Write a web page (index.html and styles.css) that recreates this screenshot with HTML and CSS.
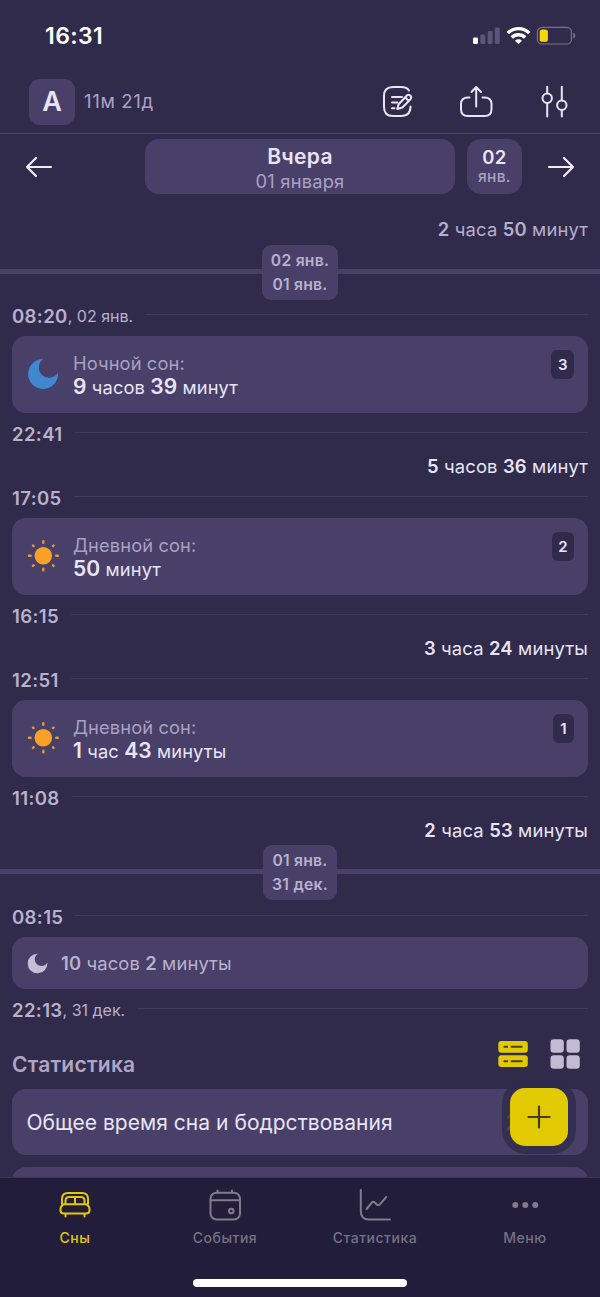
FILE: index.html
```html
<!DOCTYPE html>
<html lang="ru">
<head>
<meta charset="utf-8">
<title>Сны</title>
<link rel="stylesheet" href="styles.css">
</head>
<body>
<div class="app">
  <div class="status">
    <span class="clock">16:31</span>
    <svg class="status-icons" width="104" height="20" viewBox="0 0 104 20">
      <rect x="1" y="11.5" width="5" height="6.5" rx="1.3" fill="#fff"/>
      <g fill="#5b5675"><rect x="8.3" y="8.5" width="5" height="9.5" rx="1.3"/><rect x="15.6" y="5" width="5" height="13" rx="1.3"/><rect x="22.8" y="1.5" width="5" height="16.5" rx="1.3"/></g>
      <g fill="none" stroke="#fff" stroke-width="3.4"><path d="M35.800 7.200A14.800 14.800 0 0 1 57.200 7.200"/><path d="M39.800 11.500A9.400 9.400 0 0 1 53.200 11.500"/></g>
      <path d="M43 14.800A5 5 0 0 1 50 14.800L46.500 18.200Z" fill="#fff"/>
      <rect x="65.4" y="1.4" width="34" height="16.6" rx="4.6" fill="none" stroke="#787488" stroke-width="1.2"/>
      <rect x="67.7" y="3.6" width="8.2" height="12.2" rx="2.6" fill="#fcd60c"/>
      <path d="M101.2 6.8Q103.3 7.5 103.3 9.7T101.2 12.6Z" fill="#787488"/>
    </svg>
  </div>
  <header class="header">
    <div class="avatar">А</div>
    <span class="age">11м 21д</span>
    <div class="actions">
      <svg width="34" height="34" viewBox="0 0 34 34"><path d="M28 6.500Q26 3 20 3H12Q3 3 3 12V23Q3 32 12 32H20Q29.500 32 29.500 22.500"/><path d="M11 13H21M11 18.500H16.500M11 24.300H13.500"/><path d="M17.500 20.500L25.600 11.700Q27.400 10 29.300 11.500Q31 13.300 29.500 15.200L21.400 23.500L16.300 25Z M24.200 13.300L27.800 17"/></svg>
      <svg width="34" height="34" viewBox="0 0 34 34"><path d="M10.500 13.500H9Q2 13.500 2 20V25Q2 32 9 32H25.500Q32.500 32 32.500 25V20Q32.500 13.500 25.500 13.500H23.500M17.200 22.500V3.500M12.500 8L17.200 3L22 8"/></svg>
      <svg width="34" height="34" viewBox="0 0 34 34"><path d="M10.200 2.800V9M10.200 19.500V32.500M24.800 2.800V16M24.800 26V32.500"/><circle cx="10.200" cy="14.300" r="4.700"/><circle cx="24.800" cy="21.200" r="4.700"/></svg>
    </div>
  </header>
  <nav class="dates">
    <svg class="arrow" width="28" height="24" viewBox="0 0 28 24"><path d="M26 12H2M11 3L2 12L11 21"/></svg>
    <div class="day current"><b>Вчера</b><span>01 января</span></div>
    <div class="day next"><b>02</b><span>янв.</span></div>
    <svg class="arrow" width="28" height="24" viewBox="0 0 28 24"><path d="M2 12H26M17 3L26 12L17 21"/></svg>
  </nav>
  <main class="timeline">
    <div class="awake dim"><b>2</b> часа <b>50</b> минут</div>
    <div class="divider"><div class="badge"><span>02 янв.</span><span>01 янв.</span></div></div>
    <div class="time"><b>08:20</b><small>, 02 янв.</small></div>
    <section class="card">
      <svg class="icon" width="32" height="32" viewBox="0 0 32 32"><path d="M16.300 1A10.300 10.300 0 1 0 31 14.700A15 15 0 1 1 16.300 1Z" fill="#3f87cf"/></svg>
      <div class="info"><span>Ночной сон:</span><p><b>9</b> часов <b>39</b> минут</p></div>
      <i class="count">3</i>
    </section>
    <div class="time"><b>22:41</b></div>
    <div class="awake"><b>5</b> часов <b>36</b> минут</div>
    <div class="time before"><b>17:05</b></div>
    <section class="card">
      <svg class="icon" width="32" height="32" viewBox="0 0 32 32"><circle cx="16.300" cy="15.700" r="8.800" fill="#f9a126"/><path class="rays" d="M16.300 1.200V2.800M16.300 28.700V30.300M2 15.700H3.600M29.200 15.700H30.800M6 5.500L6.600 6.100M26 25.300L26.600 25.900M6 25.900L6.600 25.300M26 6.100L26.600 5.500"/></svg>
      <div class="info"><span>Дневной сон:</span><p><b>50</b> минут</p></div>
      <i class="count">2</i>
    </section>
    <div class="time"><b>16:15</b></div>
    <div class="awake"><b>3</b> часа <b>24</b> минуты</div>
    <div class="time before"><b>12:51</b></div>
    <section class="card">
      <svg class="icon" width="32" height="32" viewBox="0 0 32 32"><circle cx="16.300" cy="15.700" r="8.800" fill="#f9a126"/><path class="rays" d="M16.300 1.200V2.800M16.300 28.700V30.300M2 15.700H3.600M29.200 15.700H30.800M6 5.500L6.600 6.100M26 25.300L26.600 25.900M6 25.900L6.600 25.300M26 6.100L26.600 5.500"/></svg>
      <div class="info"><span>Дневной сон:</span><p><b>1</b> час <b>43</b> минуты</p></div>
      <i class="count">1</i>
    </section>
    <div class="time"><b>11:08</b></div>
    <div class="awake"><b>2</b> часа <b>53</b> минуты</div>
    <div class="divider second"><div class="badge"><span>01 янв.</span><span>31 дек.</span></div></div>
    <div class="time"><b>08:15</b></div>
    <section class="card compact">
      <svg width="21" height="21" viewBox="0 0 32 32"><path d="M16.300 1A10.300 10.300 0 1 0 31 14.700A15 15 0 1 1 16.300 1Z" fill="#c5bfd5"/></svg>
      <p><b>10</b> часов <b>2</b> минуты</p>
    </section>
    <div class="time"><b>22:13</b><small>, 31 дек.</small></div>
    <div class="stats-head">
      <h2>Статистика</h2>
      <svg width="30" height="30" viewBox="0 0 30 30"><g fill="#e2ca03"><rect x="0.300" y="2" width="29.500" height="11.800" rx="3"/><rect x="0.300" y="16.200" width="29.500" height="11.800" rx="3"/></g><path d="M6.300 7.700H9.200M13.500 7.700H23.700M6.300 22.300H9.200M13.500 22.300H23.700" stroke="#49421f" stroke-width="2" stroke-linecap="round"/></svg>
      <svg width="30" height="30" viewBox="0 0 30 30" fill="#c1bccf"><rect x="0.500" y="0.300" width="13.300" height="13.500" rx="3.300"/><rect x="16.500" y="0.300" width="13.300" height="13.500" rx="3.300"/><rect x="0.500" y="16.200" width="13.300" height="13.500" rx="3.300"/><rect x="16.500" y="16.200" width="13.300" height="13.500" rx="3.300"/></svg>
    </div>
    <section class="card stat"><span>Общее время сна и бодрствования</span><span class="total">2</span></section>
    <section class="card stat"></section>
  </main>
  <div class="add"><svg width="58" height="58" viewBox="0 0 58 58"><path d="M29 18.500V39.500M18.500 29H39.500" stroke="#453a1d" stroke-width="2.200" stroke-linecap="round"/></svg></div>
  <footer class="tabs">
    <div class="tab active">
      <svg width="34" height="34" viewBox="0 0 34 34"><path d="M4 16V11Q4 5 10 5H24Q30 5 30 11V16M7.500 16V12.500Q7.500 9 11 9H23Q26.500 9 26.500 12.500V16M17 9V16M5.500 16.300H28.500Q31.500 18 31.500 21V22.500Q31.500 25.500 28 25.500H6Q2.500 25.500 2.500 22.500V21Q2.500 18 5.500 16.300ZM7.500 26V28.500M26.500 26V28.500"/></svg>
      <span>Сны</span>
    </div>
    <div class="tab">
      <svg width="34" height="34" viewBox="0 0 34 34"><rect x="2.500" y="4.700" width="29.500" height="26.800" rx="6"/><path d="M2.500 12.300H32M9.500 2.500V4.500M24 2.500V4.500"/><circle cx="23.300" cy="23" r="2.300"/></svg>
      <span>События</span>
    </div>
    <div class="tab">
      <svg width="34" height="34" viewBox="0 0 34 34"><path d="M2.800 2V23Q2.800 31.500 11 31.500H32M8.500 21L14 14.500Q15.300 13 16.800 14.500L18.800 16.500Q20.300 18 21.800 16.400L28.300 9"/></svg>
      <span>Статистика</span>
    </div>
    <div class="tab">
      <svg width="34" height="34" viewBox="0 0 34 34"><g fill="#817c88" stroke="none"><circle cx="7.300" cy="17" r="3"/><circle cx="17.300" cy="17" r="3"/><circle cx="27.300" cy="17" r="3"/></g></svg>
      <span>Меню</span>
    </div>
    <div class="home"></div>
  </footer>
</div>
</body>
</html>
```
FILE: styles.css
```css
* { box-sizing: border-box; }
body { margin: 0; background: #302b4b; font-family: Inter, "Liberation Sans", sans-serif; color: #e9e4f5; }
p, h2 { margin: 0; }
b { font-weight: 600; }
svg { display: block; flex: none; }
.app { position: relative; display: flex; flex-direction: column; width: 600px; height: 1297px; overflow: hidden; }

.status { display: flex; flex: none; justify-content: space-between; align-items: center; height: 72px; padding: 0 24px 0 45px; }
.clock { margin-top: -1px; font-size: 23px; font-weight: 600; color: #fff; letter-spacing: 0.400px; }
.status-icons { margin-top: -1px; }

.header { display: flex; flex: none; align-items: center; height: 62px; padding: 0 29px 2px 29px; border-bottom: 1px solid #4a4561; }
.avatar { display: grid; place-items: center; width: 46px; height: 46px; margin-right: 9px; border-radius: 11px; background: #484068; font-size: 27px; font-weight: 600; }
.age { font-size: 18.700px; letter-spacing: 0.600px; color: #aaa2c1; }
.actions { display: flex; gap: 44px; margin: -2px 0 0 auto; }
.actions svg { fill: none; stroke: #e9e4f5; stroke-width: 2; stroke-linecap: round; stroke-linejoin: round; }

.dates { display: flex; flex: none; align-items: center; height: 60px; padding: 5px 25px 0; }
.arrow { fill: none; stroke: #f1edf8; stroke-width: 2.200; stroke-linecap: round; stroke-linejoin: round; }
.day { display: flex; flex-direction: column; align-items: center; justify-content: center; height: 55px; border-radius: 14px; background: #484068; }
.day span { color: #aaa2c1; }
.current { width: 310px; margin: 0 12px 0 92px; padding-top: 4px; font-size: 18.300px; line-height: 24px; letter-spacing: 0.200px; }
.current b { font-size: 21px; letter-spacing: 0.300px; }
.next { width: 55px; margin-right: 25px; font-size: 15.500px; line-height: 20px; font-weight: 500; letter-spacing: 0.300px; }
.next b { font-size: 18.500px; letter-spacing: 0.300px; }

.timeline { flex: 1; min-height: 0; overflow: hidden; padding: 23px 12px 0; }
.awake { height: 24px; line-height: 24px; font-size: 18.400px; letter-spacing: 0.160px; text-align: right; }
.dim { color: #b5aecb; }
.divider { display: flex; justify-content: center; height: 55px; margin: 4px -12px -4px; background: linear-gradient(#484068, #484068) 0 24px / 100% 5px no-repeat; }
.second { margin: 3px -12px -3px; }
.badge { display: flex; flex-direction: column; justify-content: center; align-items: center; padding: 0 9px; border-radius: 9px; background: #484068; font-size: 15.700px; line-height: 24px; font-weight: 600; letter-spacing: 0.250px; color: #b8b1cd; }
.time { display: flex; align-items: center; height: 41px; font-size: 18.600px; letter-spacing: 0.350px; color: #b8b1cd; white-space: pre; }
.time small { padding-top: 1px; font-size: 16px; letter-spacing: 0; }
.time::after { content: ""; flex: 1; height: 1px; margin: -2px 0 0 12px; background: #413a5d; }
.before, .divider + .time { height: 40px; padding-bottom: 1px; }
.card { display: flex; height: 77px; padding: 15px 14px 0 15px; border-radius: 14px; background: #484068; }
.icon { margin: 7px 14px 0 0; }
.rays { fill: none; stroke: #e69b35; stroke-width: 2.400; stroke-linecap: round; }
.info { flex: 1; font-size: 18.300px; line-height: 24px; letter-spacing: 0.120px; }
.info span { color: #a9a1c2; }
.info b { font-size: 21px; }
.count { display: grid; place-items: center; min-width: 21px; height: 29px; border-radius: 6px; padding: 0 6.500px; background: #302b4b; font-size: 15px; font-weight: 600; font-style: normal; margin-top: -1px; }
.compact { align-items: center; height: 52px; padding: 0 15px; gap: 13px; font-size: 18.400px; letter-spacing: 0.120px; color: #b8b1cd; }
.stats-head { display: flex; height: 59px; padding: 9px 8px 0 0; gap: 22px; }
.stats-head h2 { flex: 1; margin-top: 13px; font-size: 21px; line-height: 26px; font-weight: 600; letter-spacing: 0.250px; color: #aea6c2; }
.stat { align-items: center; height: 66px; margin-bottom: 12px; padding: 0 76px 0 14.500px; justify-content: space-between; font-size: 21px; letter-spacing: 0.030px; }
.total { margin-right: -6px; color: #a9a1c2; }

.add { position: absolute; left: 502px; top: 1080px; padding: 8px; border-radius: 24px; background: rgba(48, 43, 75, 0.800); }
.add svg { border-radius: 15px; background: #e2ca03; }

.tabs { position: relative; display: flex; flex: none; height: 120px; padding-top: 10px; border-top: 1px solid #3b3654; background: #221d3b; }
.tab { display: flex; flex: 1; flex-direction: column; align-items: center; gap: 6px; font-size: 14px; line-height: 20px; font-weight: 500; letter-spacing: 0.500px; color: #777281; }
.tab svg { fill: none; stroke: #817c88; stroke-width: 2; stroke-linecap: round; stroke-linejoin: round; }
.active { color: #e2ca03; }
.active svg { stroke: #e2ca03; }
.home { position: absolute; left: 193px; bottom: 10px; width: 214px; height: 8px; border-radius: 4px; background: #fff; }
```
